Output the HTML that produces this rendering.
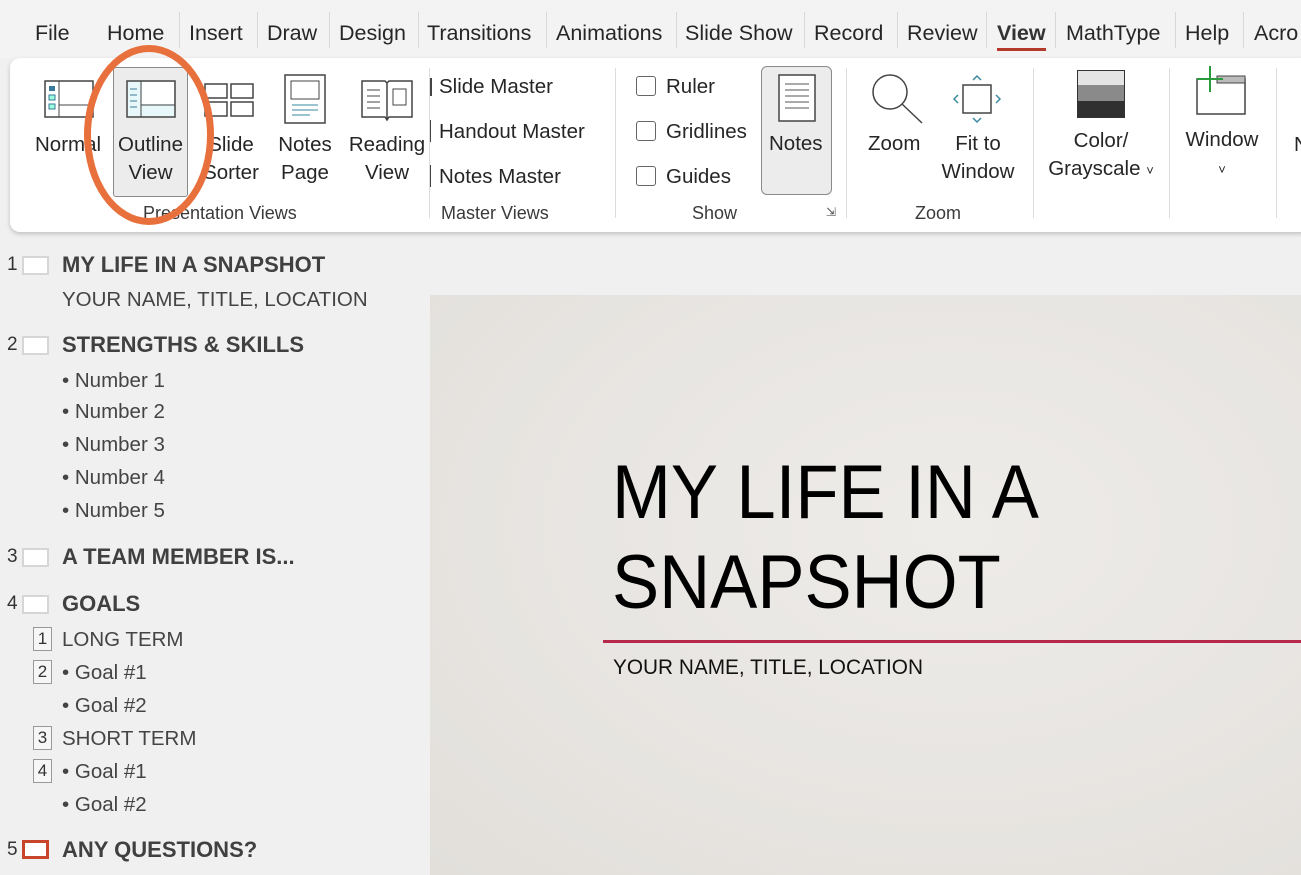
<!DOCTYPE html>
<html><head><meta charset="utf-8"><style>
*{margin:0;padding:0;box-sizing:border-box}
body{width:1301px;height:875px;overflow:hidden;background:#f0f0f0;font-family:"Liberation Sans",sans-serif;position:relative;color:#262626}
.a{position:absolute;white-space:nowrap}
.tab{font-size:21.5px;top:21px;color:#262626}
.sep{position:absolute;top:12px;width:1px;height:36px;background:#d8d8d8}
.rb{position:absolute;left:10px;top:58px;width:1300px;height:174px;background:#fff;border-radius:10px;box-shadow:0 2px 5px rgba(0,0,0,.2)}
.lbl{font-size:20.5px;color:#262626;text-align:center;line-height:28px}
.grp{font-size:18px;color:#3a3a3a;top:203px}
.vs{position:absolute;top:68px;width:1px;height:150px;background:#dcdcdc}
.cb{position:absolute;width:20px;height:20px;border:1.5px solid #666;border-radius:3px;background:#fff}
.ol{font-size:22px}
.h{font-weight:bold;color:#404040}
.n{font-size:19px;color:#333}
.th{position:absolute;left:22px;width:27px;height:19px;background:#fff;border:2px solid #d6d6d6}
.sub{font-size:20.5px;color:#444}
.nb{position:absolute;left:33px;width:19px;height:24px;border:1px solid #999;font-size:17px;text-align:center;line-height:22px;color:#333;background:#f6f6f6}
</style></head><body>
<div style="position:absolute;left:0;top:0;width:1301px;height:58px;background:#f3f3f3"></div>
<div class="a tab" style="left:35px">File</div>
<div class="a tab" style="left:107px">Home</div><div class="sep" style="left:179px"></div>
<div class="a tab" style="left:189px">Insert</div><div class="sep" style="left:257px"></div>
<div class="a tab" style="left:267px">Draw</div><div class="sep" style="left:329px"></div>
<div class="a tab" style="left:339px">Design</div><div class="sep" style="left:418px"></div>
<div class="a tab" style="left:427px">Transitions</div><div class="sep" style="left:546px"></div>
<div class="a tab" style="left:556px">Animations</div><div class="sep" style="left:676px"></div>
<div class="a tab" style="left:685px">Slide Show</div><div class="sep" style="left:804px"></div>
<div class="a tab" style="left:814px">Record</div><div class="sep" style="left:897px"></div>
<div class="a tab" style="left:907px">Review</div><div class="sep" style="left:986px"></div>
<div class="a tab" style="left:997px;font-weight:bold;color:#333">View</div>
<div style="position:absolute;left:997px;top:48px;width:49px;height:3px;background:#b33a2a"></div>
<div class="sep" style="left:1055px"></div>
<div class="a tab" style="left:1066px">MathType</div><div class="sep" style="left:1175px"></div>
<div class="a tab" style="left:1185px">Help</div><div class="sep" style="left:1243px"></div>
<div class="a tab" style="left:1254px">Acro</div>

<div class="rb"></div>
<svg class="a" style="left:44px;top:80px" width="50" height="40"><rect x="1" y="1" width="48" height="36" fill="#fff" stroke="#444" stroke-width="1.5"/><line x1="15" y1="1" x2="15" y2="37" stroke="#444"/><line x1="15" y1="25" x2="49" y2="25" stroke="#444"/><rect x="5" y="6" width="6" height="5" fill="#3a7a9a"/><rect x="5" y="15" width="6" height="5" fill="#9fd" stroke="#3a7a9a"/><rect x="5" y="24" width="6" height="5" fill="#9fd" stroke="#3a7a9a"/></svg>
<div class="a lbl" style="left:35px;top:131px">Normal</div>
<div style="position:absolute;left:113px;top:67px;width:75px;height:130px;background:#ececec;border:1px solid #8a8a8a;border-radius:3px"></div>
<svg class="a" style="left:126px;top:80px" width="50" height="40"><rect x="1" y="1" width="48" height="36" fill="#e8f8fa" stroke="#444" stroke-width="1.5"/><rect x="16" y="2" width="32" height="22" fill="#fff"/><line x1="15" y1="1" x2="15" y2="37" stroke="#444"/><line x1="15" y1="25" x2="49" y2="25" stroke="#444"/><g stroke="#3a7a9a"><line x1="4" y1="9" x2="11" y2="9"/><line x1="4" y1="15" x2="11" y2="15"/><line x1="4" y1="21" x2="11" y2="21"/><line x1="4" y1="27" x2="11" y2="27"/></g></svg>
<div class="a lbl" style="left:115px;top:131px;width:71px">Outline<br>View</div>
<svg class="a" style="left:204px;top:80px" width="50" height="40"><g fill="#fff" stroke="#444" stroke-width="1.5"><rect x="1" y="4" width="22" height="14"/><rect x="27" y="4" width="22" height="14"/><rect x="1" y="22" width="22" height="14"/><rect x="27" y="22" width="22" height="14"/></g></svg>
<div class="a lbl" style="left:199px;top:131px;width:64px">Slide<br>Sorter</div>
<svg class="a" style="left:284px;top:74px" width="42" height="50"><rect x="1" y="1" width="40" height="48" fill="#fff" stroke="#444" stroke-width="1.5"/><rect x="7" y="7" width="28" height="18" fill="#fff" stroke="#444"/><g stroke="#3a8aa0"><line x1="8" y1="31" x2="34" y2="31"/><line x1="8" y1="36" x2="34" y2="36"/><line x1="8" y1="41" x2="26" y2="41"/></g></svg>
<div class="a lbl" style="left:274px;top:131px;width:62px">Notes<br>Page</div>
<svg class="a" style="left:360px;top:77px" width="54" height="46"><path d="M27 6 L27 42 M2 4 H25 L27 6 L29 4 H52 V40 H29 L27 43 L25 40 H2 Z" fill="#fff" stroke="#444" stroke-width="1.5"/><g stroke="#444"><line x1="7" y1="13" x2="20" y2="13"/><line x1="7" y1="19" x2="20" y2="19"/><line x1="7" y1="25" x2="20" y2="25"/><line x1="7" y1="31" x2="20" y2="31"/></g><rect x="33" y="12" width="13" height="16" fill="none" stroke="#444"/></svg>
<div class="a lbl" style="left:345px;top:131px;width:84px">Reading<br>View</div>
<div class="a grp" style="left:143px">Presentation Views</div>
<div style="position:absolute;left:84px;top:45px;width:130px;height:180px;border:7px solid #e8703c;border-radius:50%"></div>
<div class="vs" style="left:429px"></div>
<div class="a lbl" style="left:439px;top:73px">Slide Master</div>
<div class="a lbl" style="left:439px;top:118px">Handout Master</div>
<div class="a lbl" style="left:439px;top:163px">Notes Master</div>
<div style="position:absolute;left:430px;top:78px;width:2px;height:18px;background:#444"></div>
<div style="position:absolute;left:430px;top:120px;width:1px;height:22px;background:#444"></div>
<div style="position:absolute;left:430px;top:165px;width:1px;height:22px;background:#444"></div>
<div class="a grp" style="left:441px">Master Views</div>
<div class="vs" style="left:615px"></div>
<div class="cb" style="left:636px;top:76px"></div><div class="a lbl" style="left:666px;top:73px">Ruler</div>
<div class="cb" style="left:636px;top:121px"></div><div class="a lbl" style="left:666px;top:118px">Gridlines</div>
<div class="cb" style="left:636px;top:166px"></div><div class="a lbl" style="left:666px;top:163px">Guides</div>
<div style="position:absolute;left:761px;top:66px;width:71px;height:129px;background:#ececec;border:1px solid #8a8a8a;border-radius:6px"></div>
<svg class="a" style="left:778px;top:74px" width="38" height="50"><rect x="1" y="1" width="36" height="46" fill="#fff" stroke="#444" stroke-width="1.5"/><g stroke="#555"><line x1="7" y1="10" x2="31" y2="10"/><line x1="7" y1="16" x2="31" y2="16"/><line x1="7" y1="22" x2="31" y2="22"/><line x1="7" y1="28" x2="31" y2="28"/><line x1="7" y1="34" x2="31" y2="34"/></g></svg>
<div class="a lbl" style="left:769px;top:130px">Notes</div>
<div class="a grp" style="left:692px">Show</div>
<div class="a" style="left:826px;top:205px;font-size:12px;color:#555">⇲</div>
<div class="vs" style="left:846px"></div>
<svg class="a" style="left:870px;top:72px" width="56" height="56"><circle cx="20" cy="20" r="17" fill="#fff" stroke="#444" stroke-width="1.5"/><line x1="32" y1="32" x2="52" y2="51" stroke="#444" stroke-width="1.5"/></svg>
<div class="a lbl" style="left:868px;top:130px">Zoom</div>
<svg class="a" style="left:952px;top:74px" width="50" height="50"><rect x="11" y="11" width="28" height="28" fill="#fff" stroke="#444" stroke-width="1.5"/><g fill="none" stroke="#3a8aa0" stroke-width="1.5"><path d="M21 6 L25 2 L29 6"/><path d="M21 44 L25 48 L29 44"/><path d="M6 21 L2 25 L6 29"/><path d="M44 21 L48 25 L44 29"/></g></svg>
<div class="a lbl" style="left:934px;top:130px;width:88px">Fit to<br>Window</div>
<div class="a grp" style="left:915px">Zoom</div>
<div class="vs" style="left:1033px"></div>
<svg class="a" style="left:1077px;top:70px" width="50" height="50"><rect x="0" y="0" width="48" height="15" fill="#e4e4e4"/><rect x="0" y="15" width="48" height="16" fill="#8a8a8a"/><rect x="0" y="31" width="48" height="17" fill="#303030"/><rect x="0.5" y="0.5" width="47" height="47" fill="none" stroke="#333"/></svg>
<div class="a lbl" style="left:1044px;top:127px;width:114px">Color/<br>Grayscale <span style="font-size:13px">˅</span></div>
<div class="vs" style="left:1169px"></div>
<svg class="a" style="left:1193px;top:66px" width="56" height="50"><rect x="4" y="13" width="48" height="35" fill="#fff" stroke="#444" stroke-width="1.5"/><rect x="24" y="10" width="28" height="7" fill="#bbb" stroke="#444"/><g stroke="#2a9a3a" stroke-width="2"><line x1="17" y1="0" x2="17" y2="26"/><line x1="4" y1="13" x2="30" y2="13"/></g></svg>
<div class="a lbl" style="left:1180px;top:126px;width:84px">Window<br><span style="font-size:13px">˅</span></div>
<div class="vs" style="left:1276px"></div>
<div class="a lbl" style="left:1294px;top:131px">N</div>

<div class="a n" style="left:7px;top:254px">1</div><div class="th" style="top:256px"></div>
<div class="a ol h" style="left:62px;top:252px">MY LIFE IN A SNAPSHOT</div>
<div class="a sub" style="left:62px;top:288px">YOUR NAME, TITLE, LOCATION</div>
<div class="a n" style="left:7px;top:334px">2</div><div class="th" style="top:336px"></div>
<div class="a ol h" style="left:62px;top:332px">STRENGTHS &amp; SKILLS</div>
<div class="a sub" style="left:62px;top:369px">• Number 1</div>
<div class="a sub" style="left:62px;top:400px">• Number 2</div>
<div class="a sub" style="left:62px;top:433px">• Number 3</div>
<div class="a sub" style="left:62px;top:466px">• Number 4</div>
<div class="a sub" style="left:62px;top:499px">• Number 5</div>
<div class="a n" style="left:7px;top:546px">3</div><div class="th" style="top:548px"></div>
<div class="a ol h" style="left:62px;top:544px">A TEAM MEMBER IS...</div>
<div class="a n" style="left:7px;top:593px">4</div><div class="th" style="top:595px"></div>
<div class="a ol h" style="left:62px;top:591px">GOALS</div>
<div class="nb" style="top:627px">1</div><div class="a sub" style="left:62px;top:628px">LONG TERM</div>
<div class="nb" style="top:660px">2</div><div class="a sub" style="left:62px;top:661px">• Goal #1</div>
<div class="a sub" style="left:62px;top:694px">• Goal #2</div>
<div class="nb" style="top:726px">3</div><div class="a sub" style="left:62px;top:727px">SHORT TERM</div>
<div class="nb" style="top:759px">4</div><div class="a sub" style="left:62px;top:760px">• Goal #1</div>
<div class="a sub" style="left:62px;top:793px">• Goal #2</div>
<div class="a n" style="left:7px;top:839px">5</div><div class="th" style="top:840px;border:3px solid #c8442a"></div>
<div class="a ol h" style="left:62px;top:837px">ANY QUESTIONS?</div>

<div style="position:absolute;left:430px;top:295px;width:871px;height:580px;background:radial-gradient(ellipse at 60% 40%,#eeece9,#e2dfdb)"></div>
<div class="a" style="left:612px;top:448px;font-size:76px;line-height:90px;color:#000;transform:scaleX(0.93);transform-origin:left top">MY LIFE IN A<br>SNAPSHOT</div>
<div style="position:absolute;left:603px;top:640px;width:698px;height:3px;background:#b5284a"></div>
<div class="a" style="left:613px;top:656px;font-size:21px;color:#111;transform:scaleX(0.99);transform-origin:left top">YOUR NAME, TITLE, LOCATION</div>
</body></html>
